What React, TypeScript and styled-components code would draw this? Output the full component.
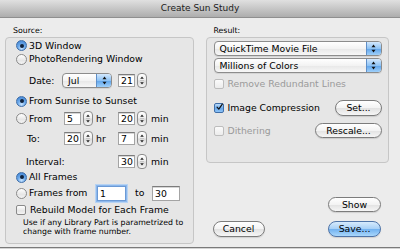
import React from 'react';
import styled, { createGlobalStyle, css } from 'styled-components';

const Global = createGlobalStyle`
  html, body { margin: 0; padding: 0; background: #d4d4d4; }
  body { width: 400px; height: 249px; overflow: hidden; font-family: "DejaVu Sans", "Lucida Grande", sans-serif; color: #000; }
  * { box-sizing: border-box; }
`;

const Window = styled.div`
  width: 400px;
  height: 248px;
  background: #ececec;
  border-bottom: 1px solid #7a7a7a;
  display: flex;
  flex-direction: column;
`;

const TitleBar = styled.div`
  height: 18px;
  flex: none;
  background: linear-gradient(#e0e0e0, #adadad);
  border-bottom: 1px solid #8f8f8f;
  text-align: center;
  font-size: 9px;
  line-height: 17px;
  color: #1c1c1c;
`;

const Body = styled.div`
  display: flex;
  gap: 12px;
  padding: 0 11px 0 5px;
  flex: 1;
`;

const Column = styled.div<{ $w: number }>`
  width: ${(p) => p.$w}px;
  display: flex;
  flex-direction: column;
`;

const GroupLabel = styled.div`
  height: 19px;
  padding: 0 0 1px 8px;
  display: flex;
  align-items: flex-end;
  font-size: 7.8px;
  line-height: 10px;
`;

const Group = styled.div<{ $h: number; $pl: number; $pr?: number }>`
  height: ${(p) => p.$h}px;
  border: 1px solid #c6c6c6;
  border-radius: 4px;
  background: #e6e6e6;
  padding: 0 ${(p) => p.$pr ?? 0}px 0 ${(p) => p.$pl}px;
  display: flex;
  flex-direction: column;
`;

const Row = styled.div<{ $h: number; $mt: number; $pl?: number }>`
  height: ${(p) => p.$h}px;
  margin-top: ${(p) => p.$mt}px;
  padding-left: ${(p) => p.$pl ?? 0}px;
  display: flex;
  align-items: center;
  font-size: 9.3px;
  white-space: nowrap;
`;

const Text = styled.span<{ $w?: number; $ml?: number; $dim?: boolean }>`
  ${(p) => (p.$w ? `width: ${p.$w}px; flex: none;` : '')}
  margin-left: ${(p) => p.$ml ?? 0}px;
  color: ${(p) => (p.$dim ? '#9a9a9a' : '#000')};
  line-height: 12px;
`;

const RadioCircle = styled.span<{ $on?: boolean }>`
  width: 11px;
  height: 11px;
  flex: none;
  border-radius: 50%;
  margin-right: 2px;
  position: relative;
  border: 1px solid ${(p) => (p.$on ? '#3f6ea8' : '#8a8a8a')};
  background: ${(p) =>
    p.$on
      ? 'radial-gradient(circle at 50% 80%, #c8e4ff 0%, #6aa8ea 45%, #3d7fd0 100%)'
      : 'linear-gradient(#ffffff, #e6e6e6 60%, #f4f4f4)'};
  ${(p) =>
    p.$on &&
    css`
      &::after {
        content: '';
        position: absolute;
        left: 2.5px;
        top: 2.5px;
        width: 4px;
        height: 4px;
        border-radius: 50%;
        background: #10233d;
      }
    `}
`;

const Radio = ({ on, children }: { on?: boolean; children: React.ReactNode }) => (
  <>
    <RadioCircle $on={on} />
    <Text>{children}</Text>
  </>
);

const Box = styled.span<{ $on?: boolean; $dim?: boolean }>`
  width: 10px;
  height: 10px;
  flex: none;
  border-radius: 2px;
  margin-right: 4px;
  display: flex;
  align-items: center;
  justify-content: center;
  border: 1px solid ${(p) => (p.$on ? '#3f6ea8' : p.$dim ? '#bdbdbd' : '#8a8a8a')};
  background: ${(p) =>
    p.$on
      ? 'linear-gradient(#b9dbfb, #6aa8ea 55%, #8cc2f6)'
      : p.$dim
      ? 'linear-gradient(#fbfbfb, #ececec)'
      : 'linear-gradient(#ffffff, #e6e6e6 60%, #f4f4f4)'};
`;

const Check = ({ on, dim, children }: { on?: boolean; dim?: boolean; children: React.ReactNode }) => (
  <>
    <Box $on={on} $dim={dim}>
      {on && (
        <svg width="10" height="10" viewBox="0 0 10 10" style={{ marginTop: -2, marginLeft: 1 }}>
          <path d="M1.5 5.2 L4 8 L9 0.8" fill="none" stroke="#111" strokeWidth="1.7" strokeLinecap="round" strokeLinejoin="round" />
        </svg>
      )}
    </Box>
    <Text $dim={dim}>{children}</Text>
  </>
);

const PopupBox = styled.div<{ $w: number }>`
  width: ${(p) => p.$w}px;
  height: 15px;
  flex: none;
  border: 1px solid #8c8c8c;
  border-radius: 4px;
  background: linear-gradient(#ffffff, #f3f3f3 50%, #e7e7e7 51%, #f7f7f7);
  display: flex;
  overflow: hidden;
  box-shadow: 0 1px 0 rgba(0, 0, 0, 0.08);
`;

const PopupText = styled.span`
  flex: 1;
  padding-left: 5px;
  line-height: 13px;
  font-size: 9.3px;
`;

const BlueKnob = styled.span`
  width: 15px;
  flex: none;
  border-left: 1px solid #5f8fc8;
  background: linear-gradient(#d3e8fd, #8ec3f5 50%, #5ea3ea 51%, #9fd0fa);
  display: flex;
  align-items: center;
  justify-content: center;
`;

const Arrows = () => (
  <svg width="5" height="9" viewBox="0 0 5 9">
    <path d="M2.5 0.5 L4.5 3.3 L0.5 3.3 Z" fill="#111" />
    <path d="M2.5 8.5 L4.5 5.7 L0.5 5.7 Z" fill="#111" />
  </svg>
);

const Popup = ({ w, children }: { w: number; children: React.ReactNode }) => (
  <PopupBox $w={w}>
    <PopupText>{children}</PopupText>
    <BlueKnob>
      <Arrows />
    </BlueKnob>
  </PopupBox>
);

const Field = styled.div<{ $w: number; $h?: number; $ml?: number; $focus?: boolean }>`
  width: ${(p) => p.$w}px;
  height: ${(p) => p.$h ?? 13}px;
  margin-left: ${(p) => p.$ml ?? 0}px;
  flex: none;
  background: #fff;
  border: 1px solid #a4a4a4;
  border-top-color: #7c7c7c;
  box-shadow: inset 0 1px 0 #d6d6d6;
  padding-left: 2px;
  font-size: 9.3px;
  line-height: ${(p) => (p.$h ?? 13) - 2}px;
  ${(p) =>
    p.$focus &&
    css`
      border-color: #6b9ad6;
      box-shadow: 0 0 0 1px #8db8ec, 0 0 0 2px #b7d3f3;
    `}
`;

const StepperBox = styled.span<{ $ml?: number }>`
  width: 10px;
  height: 15px;
  flex: none;
  margin-left: ${(p) => p.$ml ?? 2}px;
  border: 1px solid #8c8c8c;
  border-radius: 4px;
  background: linear-gradient(#ffffff, #eeeeee 48%, #d9d9d9 52%, #f5f5f5);
  display: flex;
  align-items: center;
  justify-content: center;
`;

const Stepper = ({ ml }: { ml?: number }) => (
  <StepperBox $ml={ml}>
    <svg width="4" height="11" viewBox="0 0 4 11">
      <path d="M2 1.5 L3.8 3.8 L0.2 3.8 Z" fill="#222" />
      <path d="M0 5.5 H4" stroke="#b0b0b0" strokeWidth="0.6" />
      <path d="M2 9.5 L3.8 7.2 L0.2 7.2 Z" fill="#222" />
    </svg>
  </StepperBox>
);

const Help = styled.div<{ $mt: number }>`
  margin-top: ${(p) => p.$mt}px;
  padding-left: 7px;
  font-size: 7.8px;
  line-height: 9px;
`;

const Button = styled.div<{ $w: number; $h?: number; $def?: boolean; $ml?: number }>`
  width: ${(p) => p.$w}px;
  height: ${(p) => p.$h ?? 16}px;
  flex: none;
  margin-left: ${(p) => (p.$ml === undefined ? 'auto' : `${p.$ml}px`)};
  border-radius: 8px;
  border: 1px solid ${(p) => (p.$def ? '#4f74a8' : '#7c7c7c')};
  background: ${(p) =>
    p.$def
      ? 'linear-gradient(#d7ebfd, #a6cff6 50%, #72b2f0 52%, #a9d7fb)'
      : 'linear-gradient(#ffffff, #f3f3f3 50%, #e2e2e2 52%, #f6f6f6)'};
  text-align: center;
  font-size: 9.3px;
  line-height: ${(p) => (p.$h ?? 16) - 2}px;
  box-shadow: 0 1px 1px rgba(0, 0, 0, 0.12);
`;

const ButtonRow = styled.div<{ $mt: number; $pl?: number; $pr?: number }>`
  display: flex;
  margin-top: ${(p) => p.$mt}px;
  padding: 0 ${(p) => p.$pr ?? 0}px 0 ${(p) => p.$pl ?? 0}px;
`;

export default function App() {
  return (
    <>
      <Global />
      <Window>
        <TitleBar>Create Sun Study</TitleBar>
        <Body>
          <Column $w={189}>
            <GroupLabel>Source:</GroupLabel>
            <Group $h={207} $pl={10}>
              <Row $h={13} $mt={1}>
                <Radio on>3D Window</Radio>
              </Row>
              <Row $h={14} $mt={0}>
                <Radio>PhotoRendering Window</Radio>
              </Row>
              <Row $h={15} $mt={7} $pl={13}>
                <Text $w={33}>Date:</Text>
                <Popup w={50}>Jul</Popup>
                <Field $w={17} $ml={6}>21</Field>
                <Stepper />
              </Row>
              <Row $h={14} $mt={6}>
                <Radio on>From Sunrise to Sunset</Radio>
              </Row>
              <Row $h={15} $mt={3}>
                <RadioCircle />
                <Text $w={35}>From</Text>
                <Field $w={17}>5</Field>
                <Stepper />
                <Text $w={22} $ml={3}>hr</Text>
                <Field $w={17}>20</Field>
                <Stepper />
                <Text $ml={4}>min</Text>
              </Row>
              <Row $h={15} $mt={5} $pl={11}>
                <Text $w={37}>To:</Text>
                <Field $w={17}>20</Field>
                <Stepper />
                <Text $w={22} $ml={3}>hr</Text>
                <Field $w={17}>7</Field>
                <Stepper />
                <Text $ml={4}>min</Text>
              </Row>
              <Row $h={15} $mt={8} $pl={10}>
                <Text $w={92}>Interval:</Text>
                <Field $w={17}>30</Field>
                <Stepper />
                <Text $ml={4}>min</Text>
              </Row>
              <Row $h={14} $mt={1}>
                <Radio on>All Frames</Radio>
              </Row>
              <Row $h={16} $mt={1}>
                <RadioCircle />
                <Text $w={68}>Frames from</Text>
                <Field $w={29} $h={15} $focus>1</Field>
                <Text $w={17} $ml={9}>to</Text>
                <Field $w={28} $h={15}>30</Field>
              </Row>
              <Row $h={14} $mt={2}>
                <Check>Rebuild Model for Each Frame</Check>
              </Row>
              <Help $mt={1}>
                Use if any Library Part is parametrized to
                <br />
                change with frame number.
              </Help>
            </Group>
          </Column>
          <Column $w={184}>
            <GroupLabel>Result:</GroupLabel>
            <Group $h={126} $pl={7} $pr={6}>
              <Row $h={15} $mt={3}>
                <Popup w={168}>QuickTime Movie File</Popup>
              </Row>
              <Row $h={15} $mt={2}>
                <Popup w={168}>Millions of Colors</Popup>
              </Row>
              <Row $h={12} $mt={5}>
                <Check dim>Remove Redundant Lines</Check>
              </Row>
              <Row $h={16} $mt={10}>
                <Check on>Image Compression</Check>
                <Button $w={47}>Set...</Button>
              </Row>
              <Row $h={15} $mt={7}>
                <Check dim>Dithering</Check>
                <Button $w={67} $h={15}>Rescale...</Button>
              </Row>
            </Group>
            <ButtonRow $mt={34} $pr={8}>
              <Button $w={53} $h={15}>Show</Button>
            </ButtonRow>
            <ButtonRow $mt={9} $pl={7} $pr={8}>
              <Button $w={52} $ml={0}>Cancel</Button>
              <Button $w={53} $def>Save...</Button>
            </ButtonRow>
          </Column>
        </Body>
      </Window>
    </>
  );
}
